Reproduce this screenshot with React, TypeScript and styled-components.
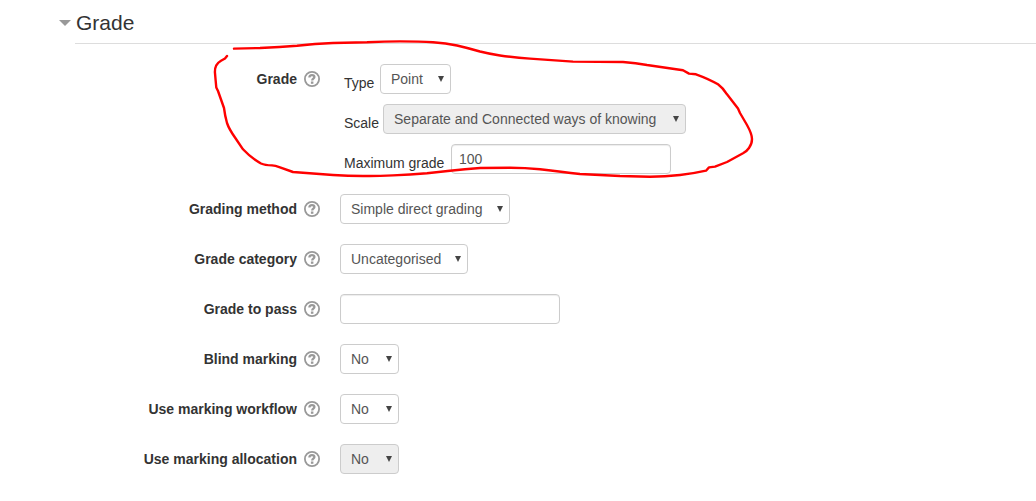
import React, { useId } from "react";
import styled, { createGlobalStyle } from "styled-components";

const GlobalStyle = createGlobalStyle`
  * { box-sizing: border-box; }
  body {
    margin: 0;
    background: #fff;
    color: #333;
    font-family: "Liberation Sans", Arial, sans-serif;
    font-size: 14px;
    line-height: 20px;
  }
`;

const Page = styled.main`
  position: relative;
  padding: 3px 0 27px 59px;
`;

const SectionTitle = styled.h3`
  margin: 0 0 20px 16px;
  border-bottom: 1px solid #ddd;
  font-size: 21px;
  font-weight: normal;
  line-height: 40px;
`;

const Toggle = styled.button`
  display: flex;
  align-items: center;
  gap: 5px;
  margin-left: -16px;
  padding: 0;
  border: 0;
  background: none;
  color: inherit;
  font: inherit;
  cursor: pointer;
`;

const Rows = styled.form`
  display: flex;
  flex-direction: column;
  gap: 20px;
  padding-left: 16px;
`;

const Row = styled.div`
  display: grid;
  grid-template-columns: 245px 1fr;
  column-gap: 20px;
  align-items: start;
`;

const RowHead = styled.div`
  display: flex;
  align-items: center;
  justify-content: flex-end;
  gap: 7px;
  height: 30px;
`;

const RowLabel = styled.label`
  font-weight: bold;
`;

const HelpButton = styled.button`
  display: flex;
  padding: 0;
  border: 0;
  background: none;
  color: #999;
  cursor: help;
`;

const Group = styled.div`
  display: flex;
  flex-direction: column;
  gap: 10px;
  padding-left: 4px;
`;

const GroupItem = styled.div`
  display: flex;
  align-items: flex-end;
  gap: 4px;
`;

const SubLabel = styled.label<{ $width: number }>`
  min-width: ${(p) => p.$width}px;
  line-height: 22px;
  white-space: nowrap;
`;

const SelectBox = styled.div<{ $width: number }>`
  display: grid;
  align-items: center;
  width: ${(p) => p.$width}px;
  max-width: 100%;

  > * { grid-area: 1 / 1; }
  > svg {
    justify-self: end;
    margin-right: 7px;
    pointer-events: none;
  }
`;

const SelectInput = styled.select`
  appearance: none;
  width: 100%;
  height: 30px;
  padding: 4px 20px 4px 10px;
  border: 1px solid #ccc;
  border-radius: 4px;
  background: #fff;
  color: #555;
  font: inherit;
  opacity: 1;

  &:disabled { background: #eee; }
`;

const TextInput = styled.input`
  width: 220px;
  height: 30px;
  padding: 4px 7px;
  border: 1px solid #ccc;
  border-radius: 4px;
  background: #fff;
  box-shadow: inset 0 1px 1px rgba(0, 0, 0, 0.075);
  color: #555;
  font: inherit;
`;

const Marker = styled.svg`
  position: absolute;
  top: 0;
  left: 0;
  pointer-events: none;
`;

function HelpIcon() {
  return (
    <svg width="16" height="16" viewBox="0 0 16 16" fill="none" stroke="currentColor" aria-hidden="true">
      <circle cx="8" cy="8" r="7.1" strokeWidth="1.8" />
      <path d="M5.4 6.6C5.4 4.9 6.4 4.2 8 4.2s2.4.8 2.4 1.9c0 1.6-2.2 1.5-2.2 3.4" strokeWidth="2.3" />
      <path d="M6.9 10.5h2.5v2.3H6.9z" fill="currentColor" stroke="none" />
    </svg>
  );
}

interface SelectProps {
  id: string;
  value: string;
  width: number;
  disabled?: boolean;
}

function Select({ id, value, width, disabled }: SelectProps) {
  return (
    <SelectBox $width={width}>
      <SelectInput id={id} defaultValue={value} disabled={disabled}>
        <option>{value}</option>
      </SelectInput>
      <svg width="6" height="6" viewBox="0 0 6 6" aria-hidden="true">
        <path d="M0 0h6L3 6z" fill="#444" />
      </svg>
    </SelectBox>
  );
}

interface FieldProps {
  label: string;
  children: (id: string) => React.ReactNode;
}

function Field({ label, children }: FieldProps) {
  const id = useId();
  return (
    <Row>
      <RowHead>
        <RowLabel htmlFor={id}>{label}</RowLabel>
        <HelpButton type="button" aria-label={`Help with ${label}`}>
          <HelpIcon />
        </HelpButton>
      </RowHead>
      {children(id)}
    </Row>
  );
}

export default function App() {
  return (
    <Page>
      <GlobalStyle />
      <SectionTitle>
        <Toggle type="button" aria-expanded="true">
          <svg width="12" height="6" viewBox="0 0 12 6" aria-hidden="true">
            <path d="M0 0h12L6 6z" fill="#999" />
          </svg>
          Grade
        </Toggle>
      </SectionTitle>

      <Rows>
        <Field label="Grade">
          {(id) => (
            <Group>
              <GroupItem>
                <SubLabel htmlFor={id} $width={32}>Type</SubLabel>
                <Select id={id} value="Point" width={71} />
              </GroupItem>
              <GroupItem>
                <SubLabel htmlFor="scale" $width={35}>Scale</SubLabel>
                <Select id="scale" value="Separate and Connected ways of knowing" width={303} disabled />
              </GroupItem>
              <GroupItem>
                <SubLabel htmlFor="maximum" $width={103}>Maximum grade</SubLabel>
                <TextInput id="maximum" type="text" defaultValue="100" />
              </GroupItem>
            </Group>
          )}
        </Field>
        <Field label="Grading method">
          {(id) => <Select id={id} value="Simple direct grading" width={170} />}
        </Field>
        <Field label="Grade category">
          {(id) => <Select id={id} value="Uncategorised" width={128} />}
        </Field>
        <Field label="Grade to pass">{(id) => <TextInput id={id} type="text" />}</Field>
        <Field label="Blind marking">{(id) => <Select id={id} value="No" width={59} />}</Field>
        <Field label="Use marking workflow">
          {(id) => <Select id={id} value="No" width={59} />}
        </Field>
        <Field label="Use marking allocation">
          {(id) => <Select id={id} value="No" width={59} disabled />}
        </Field>
      </Rows>

      <Marker width="760" height="184" viewBox="0 0 760 184" aria-hidden="true">
        <path
          d="M234 48.6L260 48Q280 47 297 45.7Q315 43.6 333 43L367 42.3Q385 41.4 400 41.4Q420 41.4 433 42.2Q446 43 457 45.5Q468 48 480 51.5Q490 54 500 55.5Q515 57.5 530 58.6L573 61.6L623 62Q636 63 647 65L683 70.3L689 73.6L696 74.3Q709 79 718 84.3Q723 88 727 94.3L738 108.5L740 113L747 125Q752 134 752 139Q752 144 749 148Q747 151 743 153.3L727 162L715 166.6L709 167.4L706 170.7Q694 173.5 680 175Q665 176.7 650 176.7L620 176L580 174Q562 172 540 169.3Q525 167.8 510 167.8L480 168Q465 169 450 170.7L427 173.3Q410 174.8 393 175.4Q375 176.3 363 176Q348 176 333 175L293 172L280 167.3Q275 165.6 272 165.4Q265 165.3 261 163.5Q251 158 243 149.3L235 137.5Q229 129 227 123Q225 116 224 108L218 91L216.3 87.5L215.6 80L214.9 72Q214.9 68 216.3 65.3Q218 62.5 221 60.7L225 58.5L227 56"
          fill="none"
          stroke="#f00"
          strokeWidth="2.4"
          strokeLinecap="round"
          strokeLinejoin="round"
        />
      </Marker>
    </Page>
  );
}
